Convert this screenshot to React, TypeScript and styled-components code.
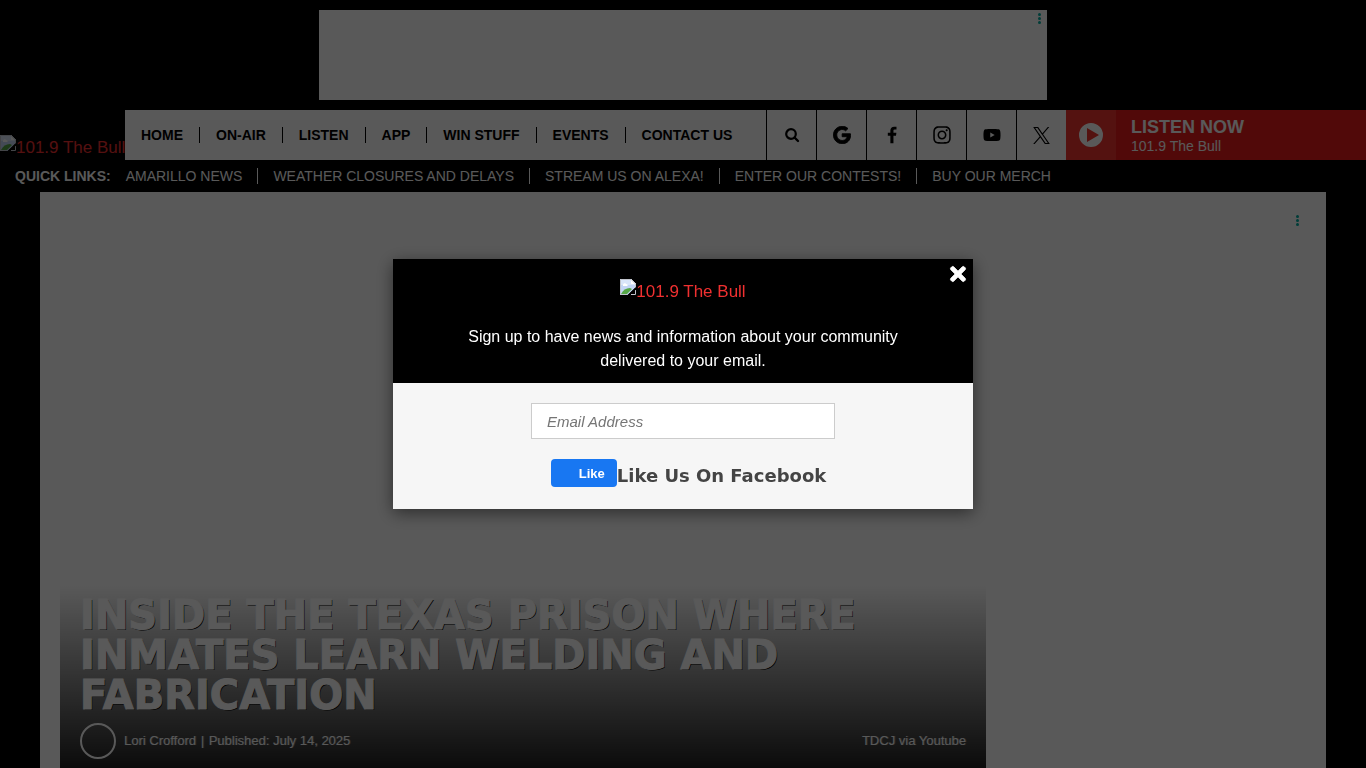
import React from "react";
import styled, { createGlobalStyle } from "styled-components";
import { FaGoogle, FaInstagram, FaYoutube, FaTimes } from "react-icons/fa";

const sans = `"Liberation Sans", Arial, sans-serif`;
const heavy = `"DejaVu Sans", "Liberation Sans", sans-serif`;

const GlobalStyle = createGlobalStyle`
  *, *::before, *::after { box-sizing: border-box; }
  body {
    margin: 0;
    background: #000;
    font-family: ${sans};
    overflow: hidden;
  }
  a { color: inherit; text-decoration: none; }
  button { font: inherit; border: 0; padding: 0; cursor: pointer; }
`;

const TopAd = styled.aside`
  position: relative;
  width: 728px;
  max-width: 100%;
  height: 90px;
  margin: 10px auto;
  background: #fff;
`;

const AdChoices = styled.button<{ $inset: number }>`
  position: absolute;
  top: 2px;
  right: ${(p) => p.$inset}px;
  width: 6px;
  height: 13px;
  background: none;
  svg { display: block; }
`;

const Header = styled.header`
  display: flex;
  align-items: stretch;
  height: 50px;
`;

const StationLogo = styled.a`
  display: flex;
  align-items: flex-start;
  color: #f03030;
  font-size: 17px;
  line-height: 26px;
  white-space: nowrap;
  svg { flex: none; }
`;

const HeaderLogo = styled(StationLogo)`
  width: 125px;
  padding-top: 25px;
`;

const Nav = styled.nav`
  flex: 1;
  display: flex;
  align-items: center;
  background: #fff;
`;

const NavLink = styled.a`
  padding: 0 16px;
  font-size: 14px;
  font-weight: 700;
  line-height: 16px;
  color: #000;
  white-space: nowrap;
  & + & { border-left: 1px solid #000; }
`;

const IconBar = styled.div`
  display: flex;
  background: #fff;
`;

const IconLink = styled.a`
  display: flex;
  align-items: center;
  justify-content: center;
  width: 50px;
  border-left: 1px solid #000;
  color: #000;
`;

const Player = styled.div`
  display: flex;
  width: 300px;
  background: #e91c1a;
  color: #fff;
`;

const PlayButton = styled.button`
  display: flex;
  align-items: center;
  justify-content: center;
  width: 50px;
  background: #f0352e;
  color: #fff;
`;

const PlayerText = styled.div`
  padding: 7px 15px;
`;

const PlayerTitle = styled.div`
  font-size: 18px;
  font-weight: 700;
  line-height: 20px;
`;

const PlayerStation = styled.div`
  font-size: 14px;
  line-height: 18px;
`;

const QuickLinks = styled.nav`
  display: flex;
  align-items: center;
  height: 32px;
  padding-left: 15px;
  color: #fff;
  font-size: 14px;
  line-height: 16px;
  white-space: nowrap;
`;

const QuickLink = styled.a`
  padding: 0 15px;
  & + & { border-left: 1px solid #fff; }
`;

const Main = styled.main`
  margin: 0 40px;
  padding: 20px;
  background: #fff;
`;

const LeaderAd = styled.aside`
  position: relative;
  height: 250px;
`;

const Hero = styled.article`
  width: calc(100% - 320px);
  padding-top: 123px;
`;

const HeroCaption = styled.div`
  padding: 10px 20px 16px;
  background: linear-gradient(to bottom, rgba(0, 0, 0, 0), rgba(0, 0, 0, 0.9));
  color: #fff;
`;

const Title = styled.h1`
  margin: 0;
  max-width: 800px;
  font-family: ${heavy};
  font-size: 40px;
  font-weight: 700;
  line-height: 40px;
  text-transform: uppercase;
  -webkit-text-stroke: 1px #fff;
  text-shadow: 1px 1px 0 #000;
`;

const Byline = styled.div`
  display: flex;
  align-items: center;
  margin-top: 8px;
  font-size: 13px;
  line-height: 16px;
  text-shadow: 1px 0 0 rgba(255, 255, 255, 0.3);
`;

const Divider = styled.span`
  margin: 0 1px;
`;

const Avatar = styled.span`
  width: 36px;
  height: 36px;
  margin-right: 8px;
  border: 2px solid #fff;
  border-radius: 50%;
`;

const Credit = styled.span`
  margin-left: auto;
`;

const Overlay = styled.div`
  position: fixed;
  inset: 0;
  display: flex;
  align-items: center;
  justify-content: center;
  background: rgba(0, 0, 0, 0.65);
`;

const Dialog = styled.section`
  position: relative;
  width: 580px;
  max-width: 100%;
  background: #f6f6f6;
  box-shadow: 0 4px 16px rgba(0, 0, 0, 0.5);
`;

const DialogHead = styled.header`
  display: flex;
  flex-direction: column;
  align-items: center;
  padding: 20px 60px 10px;
  background: #000;
  color: #fff;
`;

const DialogText = styled.p`
  margin: 20px 0 0;
  font-size: 16px;
  line-height: 24px;
  text-align: center;
`;

const CloseButton = styled.button`
  position: absolute;
  top: 4px;
  right: 4px;
  width: 22px;
  height: 22px;
  background: none;
  color: #fff;
  svg { display: block; stroke: #fff; stroke-width: 20px; }
`;

const SignUp = styled.form`
  display: flex;
  flex-direction: column;
  align-items: center;
  padding: 20px 20px 22px;
`;

const EmailInput = styled.input`
  width: 304px;
  height: 36px;
  padding: 0 15px;
  border: 1px solid #ccc;
  background: #fff;
  font: italic 15px/20px ${sans};
  &::placeholder { color: #757575; opacity: 1; }
`;

const LikeRow = styled.div`
  display: flex;
  align-items: center;
  height: 28px;
  margin-top: 20px;
  padding-left: 11px;
`;

const LikeButton = styled.button`
  width: 66px;
  height: 28px;
  padding-left: 16px;
  border-radius: 4px;
  background: #1877f2;
  color: #fff;
  font-size: 13px;
  font-weight: 700;
`;

const LikeText = styled.strong`
  padding-top: 6px;
  font-family: ${heavy};
  font-size: 18px;
  font-weight: 700;
  line-height: 22px;
  color: #444;
  white-space: nowrap;
`;

const BrokenImage = () => (
  <svg width="16" height="16" viewBox="0 0 16 16" aria-hidden="true">
    <path d="M0 0h11l5 5v3L8 16H0z" fill="#c3d5f5" />
    <path d="M0 0h11l5 5v1H0z" fill="#d9e5fa" />
    <path d="M11 0v5h5z" fill="#fff" />
    <path d="M3 6c0-2 3-2 3-1 2 0 2 2 1 2H3z" fill="#fff" />
    <path d="M1 15c2-4 5-6 9-6l2 1-6 6H1z" fill="#55a646" />
    <path d="M0.5 16V0.5H11L15.5 5v4M1 15.500h6M11 15.500h4.500V11" fill="none" stroke="#c0c4cc" />
    <path d="M16 8L7.500 16H10l6-5.500z" fill="#000" />
  </svg>
);

const Dots = () => (
  <svg width="6" height="13" viewBox="0 0 6 13" fill="#00aea0">
    <circle cx="3.500" cy="2.500" r="1.500" />
    <circle cx="3.500" cy="6.500" r="1.500" />
    <circle cx="3.500" cy="10.500" r="1.500" />
  </svg>
);

const PlayIcon = () => (
  <svg width="24" height="24" viewBox="0 0 24 24" aria-hidden="true">
    <path fill="currentColor" fillRule="evenodd" d="M12 0a12 12 0 1 0 0 24a12 12 0 0 0 0-24zM8 5l12 7-12 7z" />
  </svg>
);

const SearchIcon = () => (
  <svg width="16" height="16" viewBox="0 0 16 16" fill="none" stroke="currentColor" aria-hidden="true">
    <circle cx="7" cy="7" r="4.800" strokeWidth="2.200" />
    <path d="M10.500 10.500L14 14" strokeWidth="2.400" strokeLinecap="round" />
  </svg>
);

const FacebookIcon = () => (
  <svg width="18" height="18" viewBox="0 -64 1792 1792" fill="currentColor" aria-hidden="true">
    <path d="M1343 12v264h-157q-86 0-116 36t-30 108v189h293l-39 296h-254v759h-306v-759h-255v-296h255v-218q0-186 104-288.5t277-102.5q147 0 228 12z" />
  </svg>
);

const XIcon = () => (
  <svg width="17" height="17" viewBox="0 0 1200 1227" fill="currentColor" aria-hidden="true">
    <path d="M714.163 519.284L1160.89 0H1055.03L667.137 450.887L357.328 0H0L468.492 681.821L0 1226.37H105.866L515.491 750.218L842.672 1226.37H1200L714.137 519.284H714.163ZM569.165 687.828L521.697 619.934L144.011 79.694H306.615L611.412 515.685L658.88 583.579L1055.08 1150.3H892.476L569.165 687.854V687.828Z" />
  </svg>
);

const navItems = ["Home", "On-Air", "Listen", "App", "Win Stuff", "Events", "Contact Us"];
const quickItems = [
  "Amarillo News",
  "Weather Closures and Delays",
  "Stream Us on Alexa!",
  "Enter Our Contests!",
  "Buy Our Merch",
];
const socials = [
  { label: "Search", icon: <SearchIcon /> },
  { label: "Google", icon: <FaGoogle size={18} stroke="currentColor" strokeWidth={24} /> },
  { label: "Facebook", icon: <FacebookIcon /> },
  { label: "Instagram", icon: <FaInstagram size={20} /> },
  { label: "YouTube", icon: <FaYoutube size={18} /> },
  { label: "X", icon: <XIcon /> },
];

export default function App() {
  return (
    <>
      <GlobalStyle />
      <TopAd>
        <AdChoices $inset={5} aria-label="Ad choices"><Dots /></AdChoices>
      </TopAd>
      <Header>
        <HeaderLogo href="#"><BrokenImage />101.9 The Bull</HeaderLogo>
        <Nav>
          {navItems.map((item) => (
            <NavLink href="#" key={item}>{item.toUpperCase()}</NavLink>
          ))}
        </Nav>
        <IconBar>
          {socials.map((s) => (
            <IconLink href="#" key={s.label} aria-label={s.label}>{s.icon}</IconLink>
          ))}
        </IconBar>
        <Player>
          <PlayButton aria-label="Play"><PlayIcon /></PlayButton>
          <PlayerText>
            <PlayerTitle>LISTEN NOW</PlayerTitle>
            <PlayerStation>101.9 The Bull</PlayerStation>
          </PlayerText>
        </Player>
      </Header>
      <QuickLinks>
        <strong>QUICK LINKS:</strong>
        {quickItems.map((item) => (
          <QuickLink href="#" key={item}>{item.toUpperCase()}</QuickLink>
        ))}
      </QuickLinks>
      <Main>
        <LeaderAd>
          <AdChoices $inset={6} aria-label="Ad choices"><Dots /></AdChoices>
        </LeaderAd>
        <Hero>
          <HeroCaption>
            <Title>Inside the Texas Prison Where Inmates Learn Welding and Fabrication</Title>
            <Byline>
              <Avatar />
              <span>Lori Crofford <Divider>|</Divider> Published: July 14, 2025</span>
              <Credit>TDCJ via Youtube</Credit>
            </Byline>
          </HeroCaption>
        </Hero>
      </Main>
      <Overlay>
        <Dialog role="dialog" aria-modal="true" aria-label="Newsletter sign up">
          <DialogHead>
            <StationLogo href="#"><BrokenImage />101.9 The Bull</StationLogo>
            <DialogText>
              Sign up to have news and information about your community delivered to your email.
            </DialogText>
          </DialogHead>
          <CloseButton aria-label="Close"><FaTimes size={22} /></CloseButton>
          <SignUp>
            <EmailInput type="email" aria-label="Email Address" placeholder="Email Address" />
            <LikeRow>
              <LikeButton type="button">Like</LikeButton>
              <LikeText>Like Us On Facebook</LikeText>
            </LikeRow>
          </SignUp>
        </Dialog>
      </Overlay>
    </>
  );
}
